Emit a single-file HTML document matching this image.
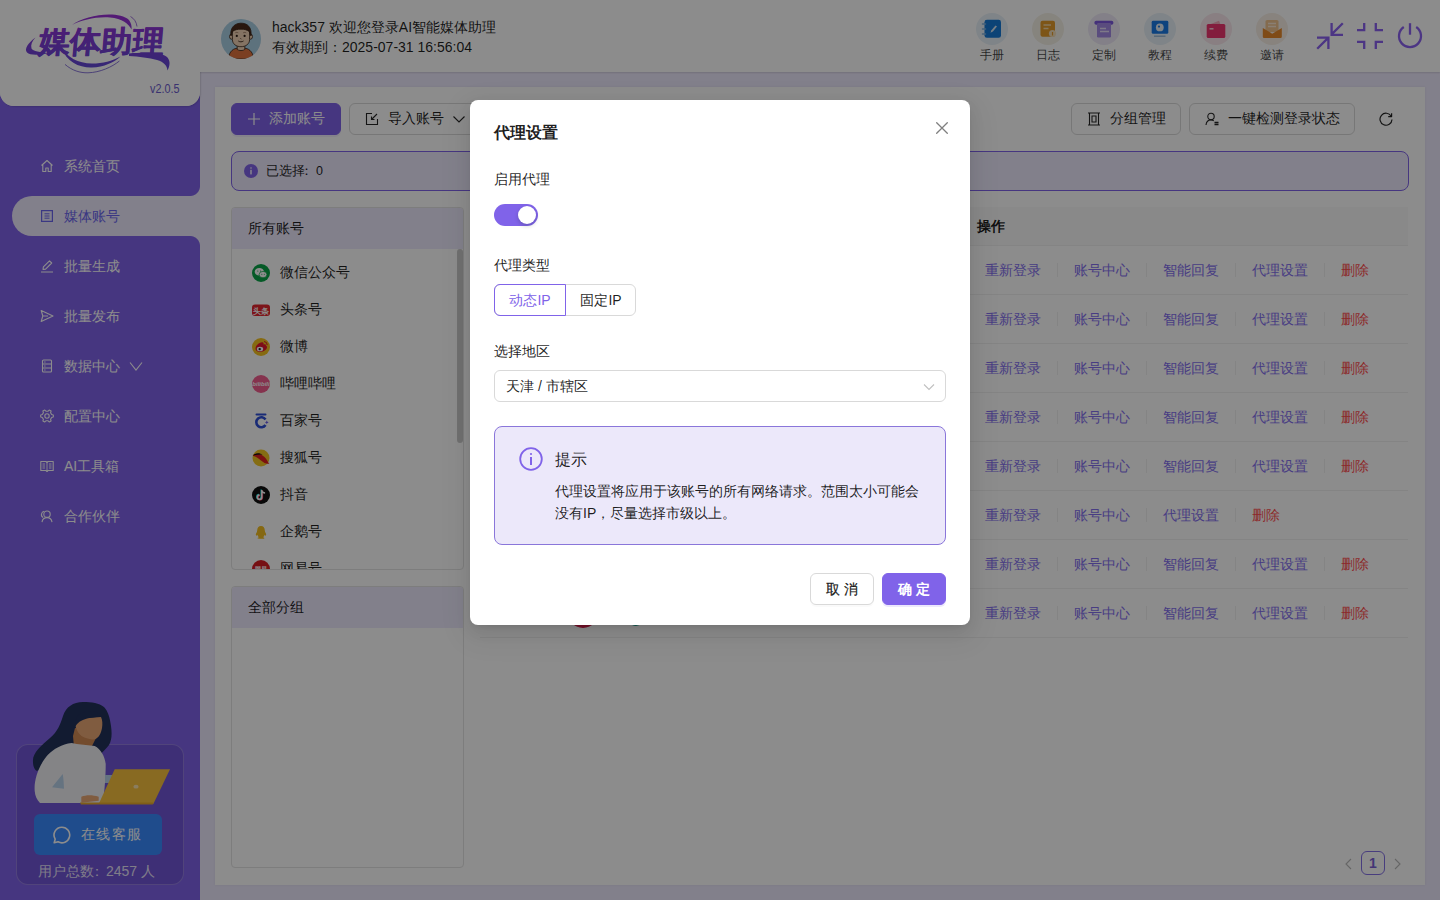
<!DOCTYPE html>
<html><head><meta charset="utf-8">
<style>
*{box-sizing:border-box;margin:0;padding:0}
html,body{width:1440px;height:900px;overflow:hidden}
body{font-family:"Liberation Sans",sans-serif;font-size:14px;color:rgba(0,0,0,.88);background:#ede9fd;position:relative}
.abs{position:absolute}
#header{left:0;top:0;width:1440px;height:72px;background:#fff;box-shadow:0 1px 1.5px rgba(0,0,0,.12);z-index:2}
#logo{left:0;top:0;width:200px;height:106px;background:#fff;border-radius:0 0 14px 14px;z-index:3}
#side{left:0;top:72px;width:200px;height:828px;background:#8063e9}
.mi{position:absolute;left:40px;height:20px;line-height:20px;color:#fff;font-size:14px;display:flex;align-items:center;white-space:nowrap}
.mi svg{width:14px;height:14px;margin-right:10px;flex:none}
#card{left:215px;top:87px;width:1210px;height:798px;background:#fff}
.btn{position:absolute;height:32px;border-radius:6px;border:1px solid #d9d9d9;background:#fff;display:flex;align-items:center;justify-content:center;font-size:14px;white-space:nowrap}
#mask{left:0;top:0;width:1440px;height:900px;background:rgba(0,0,0,.45);z-index:10}
#modal{left:470px;top:100px;width:500px;height:525px;background:#fff;border-radius:8px;z-index:11;box-shadow:0 6px 16px 0 rgba(0,0,0,.08),0 3px 6px -4px rgba(0,0,0,.12),0 9px 28px 8px rgba(0,0,0,.05)}
.hicon{position:absolute;top:13px;width:32px;height:32px;border-radius:50%}
.hlab{position:absolute;top:47px;width:40px;text-align:center;font-size:12px;line-height:16px;color:rgba(0,0,0,.75)}

.link{position:absolute;color:#8470ee;white-space:nowrap;line-height:20px}
.sep{position:absolute;width:1px;height:14px;background:rgba(5,5,5,.06)}
.acc{position:absolute;left:20px;display:flex;align-items:center;height:20px;white-space:nowrap}
.acc i{display:block;width:18px;height:18px;border-radius:50%;margin-right:10px;flex:none;position:relative}
</style></head><body>
<div id="header" class="abs">
<div class="abs" style="left:221px;top:19px;width:40px;height:40px;border-radius:50%;background:#a9cfe4;overflow:hidden">
<svg width="40" height="40" viewBox="0 0 40 40" stroke="#3a2418" stroke-width=".8">
<path d="M7.5 40c0-5 3-10.2 8.5-10.8h8c5.5.6 8.5 5.8 8.5 10.8z" fill="#e0733e"/>
<path d="M16.2 26h7.6v4.4c-1.5 1.6-6.1 1.6-7.6 0z" fill="#f0d2b4"/>
<ellipse cx="10.5" cy="17.6" rx="2" ry="2.6" fill="#f0d2b4"/><ellipse cx="29.5" cy="17.6" rx="2" ry="2.6" fill="#f0d2b4"/>
<path d="M11.4 13c0-3.5 3.2-5 8.6-5s8.6 1.5 8.6 5v7.5c0 4.5-3.8 7.2-8.6 7.2s-8.6-2.7-8.6-7.2z" fill="#f0d2b4"/>
<path d="M10 17c-1.2-7 2.5-12.5 9.5-12.8 7-.3 11.5 4 10.5 12.8-.8-1.8-1.4-3-1.8-4.5-2.2-1.8-5-2.3-8.2-2.3s-6.4.5-8.4 2.2c-.6 1.5-1 2.8-1.6 4.6z" fill="#4a2a1a"/>
<circle cx="15.8" cy="16.9" r="1.1" fill="#2a1a12" stroke="none"/><circle cx="23.6" cy="16.9" r="1.1" fill="#2a1a12" stroke="none"/>
<path d="M14.3 13.8c1-.5 2-.5 3 0M22.2 13.8c1-.5 2-.5 3 0" fill="none" stroke="#8a6650" stroke-width=".7"/>
<path d="M19.5 19.3l.8.9" fill="none"/>
<path d="M17.3 22c1.6 1.1 3.6 1.1 5.2 0" fill="none" stroke-width=".9"/>
</svg>
</div>
  <div class="abs" style="left:272px;top:17px;line-height:20px;font-size:14px;white-space:nowrap">hack357 欢迎您登录AI智能媒体助理</div>
<div class="hicon" style="left:976px;background:#e8f1f8"></div><div class="hlab" style="left:972px">手册</div><div class="hicon" style="left:1032px;background:#f5f1e6"></div><div class="hlab" style="left:1028px">日志</div><div class="hicon" style="left:1088px;background:#efeaf8"></div><div class="hlab" style="left:1084px">定制</div><div class="hicon" style="left:1144px;background:#e8f1f8"></div><div class="hlab" style="left:1140px">教程</div><div class="hicon" style="left:1200px;background:#f9e8ed"></div><div class="hlab" style="left:1196px">续费</div><div class="hicon" style="left:1256px;background:#f7efe5"></div><div class="hlab" style="left:1252px">邀请</div><svg class="abs" style="left:960px;top:0" width="340" height="50" viewBox="960 0 340 50">
<rect x="984.5" y="19.8" width="16.5" height="18" rx="2.4" fill="#167bd8"/>
<path d="M982.5 24h3M982.5 29h3M982.5 34h3" stroke="#7fb0dc" stroke-width="1.5" stroke-linecap="round"/>
<path d="M990.5 32.8l.9-2.6 4.1-4.8 1.5 1.2-4.1 4.8z" fill="#d8e6f3"/>
<rect x="1040.5" y="20.8" width="14.5" height="16" rx="2" fill="#e49b2a"/>
<path d="M1043.5 25h7.5M1043.5 28.5h5" stroke="#f5d9a8" stroke-width="1.3"/>
<circle cx="1052.5" cy="33.5" r="3.6" fill="#f3dfba"/><path d="M1052.5 32v3.5" stroke="#e49b2a" stroke-width="1.2"/>
<rect x="1094.4" y="20.8" width="19" height="4" rx="1.8" fill="#7c58df"/>
<rect x="1097" y="23" width="14" height="14.5" rx="1.2" fill="#a58be6"/>
<path d="M1100 28.5h6M1100 31.5h9" stroke="#e6ddf8" stroke-width="1.3"/>
<rect x="1151.7" y="20.8" width="16.6" height="13" rx="1.4" fill="#1a7ae6"/>
<circle cx="1159.8" cy="27.4" r="3.9" fill="#e6eef6"/><circle cx="1159" cy="26.6" r="1.1" fill="#1a7ae6"/>
<path d="M1154 36.2h11.5" stroke="#93b4d4" stroke-width="1.3"/>
<path d="M1209.5 24.5l9.5-3.8 1.5 3.8z" fill="#f3a9ba"/>
<rect x="1206.7" y="24.1" width="18.6" height="14" rx="1.5" fill="#ee3670"/>
<path d="M1209.5 28.8h4" stroke="#f8cbd7" stroke-width="1.6"/>
<rect x="1265.5" y="20" width="13" height="12" rx="1.6" fill="#f0c48f"/>
<path d="M1268 23.5h8M1268 26.5h8" stroke="#fbe8d2" stroke-width="1.3"/>
<path d="M1262.8 28l9.5 5.8 9.5-5.8v8.8a1.3 1.3 0 0 1-1.3 1.3h-16.4a1.3 1.3 0 0 1-1.3-1.3z" fill="#e8892a"/>
</svg>
<svg class="abs" style="left:1316px;top:22px" width="28" height="28" viewBox="0 0 28 28" fill="none" stroke="#8a62f0" stroke-width="2.3" stroke-linecap="butt"><path d="M26.8 1.2L15.6 12.4M15.6 1v11.8H27M1.2 26.8L12.4 15.6M1 15.6H12.4V27"/></svg>
<svg class="abs" style="left:1357px;top:23px" width="26" height="26" viewBox="0 0 26 26" fill="none" stroke="#8a62f0" stroke-width="2.3"><path d="M7.2 0v7.2H0M18.8 0v7.2H26M7.2 26v-7.2H0M18.8 26v-7.2H26"/></svg>
<svg class="abs" style="left:1397px;top:22px" width="26" height="28" viewBox="0 0 26 28" fill="none" stroke="#8a62f0" stroke-width="2.3"><path d="M13 1.2v11.5"/><path d="M19.2 5A11 11 0 1 1 6.8 5"/></svg>
  <div class="abs" style="left:272px;top:37px;line-height:20px;font-size:14px;white-space:nowrap">有效期到：2025-07-31 16:56:04</div>
</div>
<div class="abs" style="left:0;top:60px;width:200px;height:46px;border-radius:0 0 14px 14px;box-shadow:1px 1px 1.5px rgba(0,0,0,.12);z-index:1;background:#fff"></div>
<div id="logo" class="abs">
<svg width="200" height="106" viewBox="0 0 200 106" style="position:absolute;left:0;top:0">
<defs><linearGradient id="lg" gradientUnits="userSpaceOnUse" x1="0" y1="14" x2="0" y2="72"><stop offset="0" stop-color="#9b2fd6"/><stop offset="1" stop-color="#5d4ad6"/></linearGradient></defs>
<g fill="url(#lg)">
<path d="M72 25C85 15 118 10 129 20 131 23 132 26 131.5 29.5 129 24 122 18.5 110 17.5 96 16.5 82 20 72 25z"/>
<path d="M35.5 37.5C28 43 24 49 27 52.5 30 55.5 40 55 49 53 40 52 33 51.5 31.5 48.5 30.5 45 32 41 35.5 37.5z"/>
<path d="M62 48C66 62 80 68 92 67.5 104 67 114 62.5 120.5 56.5 112 61 103 63.5 92 63.5 78 63.5 67 57 62 48z"/>
<path d="M129 53.5C148 52 163 53 167.5 57.5 170.5 61 170 66 167.5 70.5 167 65.5 164 62 157 60 149 58 139 56.5 129 56z"/>
<text x="38" y="52.5" font-family="Liberation Sans" font-weight="bold" font-size="30" transform="skewX(-5) translate(4.5 0)" textLength="125" lengthAdjust="spacingAndGlyphs" stroke="url(#lg)" stroke-width=".5" stroke-linejoin="round">媒体助理</text>
</g>
<path d="M130.5 16.5C134 18.5 136.5 22 137 26.5" fill="none" stroke="#8a4fd0" stroke-width=".8"/>
<path d="M65 64.4C72 70.5 80 73 88 72.8 100 72.5 112 67 119.4 61" fill="none" stroke="#6d56d0" stroke-width=".8"/>
<text x="150" y="93" font-family="Liberation Sans" font-size="12" fill="#6a5bcc" textLength="29.5" lengthAdjust="spacingAndGlyphs">v2.0.5</text>
</svg>
</div>
<div id="side" class="abs">
  <div class="abs" style="left:12px;top:124px;width:188px;height:40px;background:#ede9fd;border-radius:20px 0 0 20px"></div>
  <div class="abs" style="left:190px;top:114px;width:10px;height:10px;background:radial-gradient(circle at 0 0,#8063e9 9.5px,#ede9fd 10.5px)"></div>
  <div class="abs" style="left:190px;top:164px;width:10px;height:10px;background:radial-gradient(circle at 0 100%,#8063e9 9.5px,#ede9fd 10.5px)"></div>
</div>
<div class="mi" style="top:156px;z-index:4"><svg viewBox="0 0 14 14" fill="none" stroke="currentColor" stroke-width="1.1" stroke-linejoin="round"><path d="M1.5 6.5L7 1.5l5.5 5M2.8 5.5V12.5h3V9h2.4v3.5h3V5.5"/></svg>系统首页</div>
<div class="mi" style="top:206px;z-index:4;color:#6a64ee"><svg viewBox="0 0 14 14" fill="none" stroke="currentColor" stroke-width="1.2"><rect x="1.6" y="1.6" width="10.8" height="10.8"/><path d="M4.5 4.8h5M4.5 7h5M4.5 9.2h5" stroke-width="1"/></svg>媒体账号</div>
<div class="mi" style="top:256px;z-index:4"><svg viewBox="0 0 14 14" fill="none" stroke="currentColor" stroke-width="1.1" stroke-linejoin="round"><path d="M1 13h12M3 10.5l.4-2.6L9.5 1.8l2.2 2.2-6.1 6.1z"/></svg>批量生成</div>
<div class="mi" style="top:306px;z-index:4"><svg viewBox="0 0 14 14" fill="none" stroke="currentColor" stroke-width="1.1" stroke-linejoin="round"><path d="M1.2 1.5L13 7 1.2 12.5 2.8 7zM2.8 7H8"/></svg>批量发布</div>
<div class="mi" style="top:356px;z-index:4"><svg viewBox="0 0 14 14" fill="none" stroke="currentColor" stroke-width="1.1"><rect x="2.5" y="1" width="9" height="12" rx="1"/><path d="M2.5 5h9M2.5 9h9"/><path d="M4.2 3h1.3M4.2 7h1.3M4.2 11h1.3" stroke-width="1"/></svg>数据中心<svg viewBox="0 0 14 14" fill="none" stroke="currentColor" stroke-width="1.1" style="margin-left:9px;margin-right:0;width:14px;height:14px"><path d="M1 3.5l6 7.5 6-7.5"/></svg></div>
<div class="mi" style="top:406px;z-index:4"><svg viewBox="0 0 14 14" fill="none" stroke="currentColor" stroke-width="1.1" stroke-linejoin="round"><path d="M11.68 5.55L13.31 5.92L13.31 8.08L11.68 8.45L10.59 10.33L11.09 11.92L9.22 13.00L8.09 11.78L5.91 11.78L4.78 13.00L2.91 11.92L3.41 10.33L2.32 8.45L0.69 8.08L0.69 5.92L2.32 5.55L3.41 3.67L2.91 2.08L4.78 1.00L5.91 2.22L8.09 2.22L9.22 1.00L11.09 2.08L10.59 3.67z"/><circle cx="7" cy="7" r="2.2"/></svg>配置中心</div>
<div class="mi" style="top:456px;z-index:4"><svg viewBox="0 0 14 14" fill="none" stroke="currentColor" stroke-width="1.1"><path d="M.8 2.5h5.2L7 3.5l1-1h5.2v9H8L7 12.5 6 11.5H.8z" stroke-linejoin="round"/><path d="M7 3.5v9M2.5 5h2.5M2.5 7h2.5M2.5 9h2.5M9 5h2.5M9 7h2.5M9 9h2.5" stroke-width=".9"/></svg>AI工具箱</div>
<div class="mi" style="top:506px;z-index:4"><svg viewBox="0 0 14 14" fill="none" stroke="currentColor" stroke-width="1.1"><circle cx="7" cy="5.2" r="3.2"/><path d="M2 13.2c.4-2.8 2.3-4.6 5-4.6s4.6 1.8 5 4.6"/><path d="M3.2 8.5C1.8 7.8 1.2 6.5 1.5 5 1.8 3.6 2.8 2.6 4.2 2.3"/></svg>合作伙伴</div>

<div id="card" class="abs" style="box-shadow:0 0 2px rgba(0,0,0,.08)"></div>
<div class="btn" style="left:231px;top:103px;width:110px;background:#8063e9;border-color:#8063e9;color:#fff;box-shadow:0 2px 0 rgba(128,99,233,.1)"><svg width="12" height="12" viewBox="0 0 12 12" style="margin-right:9px"><path d="M6 0v12M0 6h12" stroke="#fff" stroke-width="1.2"/></svg>添加账号</div>
<div class="btn" style="left:349px;top:103px;width:130px;justify-content:flex-start;padding-left:15px"><svg width="14" height="14" viewBox="0 0 14 14" fill="none" stroke="rgba(0,0,0,.85)" stroke-width="1.1" style="margin-right:9px"><path d="M7 1.5H1.5v11h11V7M6.5 7.5L12 2M6.5 4.5v3h3"/></svg>导入账号<svg width="14" height="14" viewBox="0 0 14 14" fill="none" stroke="rgba(0,0,0,.85)" stroke-width="1.1" style="margin-left:8px"><path d="M1.5 4.5L7 10l5.5-5.5"/></svg></div>
<div class="btn" style="left:1071px;top:103px;width:110px"><svg width="14" height="14" viewBox="0 0 14 14" fill="none" stroke="rgba(0,0,0,.85)" stroke-width="1.1" style="margin-right:9px"><path d="M1 1h12M1 13h12M2.5 1v12M11.5 1v12M5 4h4v6H5z"/></svg>分组管理</div>
<div class="btn" style="left:1189px;top:103px;width:166px"><svg width="14" height="14" viewBox="0 0 14 14" fill="none" stroke="rgba(0,0,0,.85)" stroke-width="1.1" style="margin-right:9px"><circle cx="6" cy="4.5" r="3.2"/><path d="M1 13c.3-3 2.3-5 5-5 1.2 0 2 .3 2.8.8"/><path d="M9.5 10.5h4M9.5 12.5h4" stroke-width="1.3"/></svg>一键检测登录状态</div>
<svg class="abs" style="left:1379px;top:112px" width="14" height="14" viewBox="0 0 14 14" fill="none" stroke="rgba(0,0,0,.85)" stroke-width="1.2"><path d="M12.2 4.2A6 6 0 1 0 13 7.5"/><path d="M12.6 1.2v3.4H9.2" stroke-linejoin="round"/></svg>
<div class="abs" style="left:231px;top:151px;width:1178px;height:40px;border:1px solid #8063e9;background:#ede9fd;border-radius:8px"></div>
<svg class="abs" style="left:244px;top:164px" width="14" height="14" viewBox="0 0 14 14"><circle cx="7" cy="7" r="7" fill="#8063e9"/><rect x="6.3" y="5.8" width="1.4" height="4.6" fill="#fff"/><circle cx="7" cy="4" r=".8" fill="#fff"/></svg>
<div class="abs" style="left:266px;top:161px;line-height:20px;font-size:12.5px">已选择<span style="margin-left:-5px;margin-right:3px">：</span>0</div>
<!-- account panel -->
<div class="abs" style="left:231px;top:207px;width:233px;height:363px;border:1px solid #e3e3e3;border-radius:4px;overflow:hidden;background:#fff">
  <div style="height:41px;background:#ede9fd;line-height:40px;padding-left:16px">所有账号</div>
  <div class="abs" style="left:225px;top:41px;width:6px;height:194px;background:rgba(0,0,0,.2);border-radius:3px"></div>
  <div class="acc" style="top:55px"><svg width="18" height="18" viewBox="0 0 18 18" style="margin-right:10px;flex:none"><circle cx="9" cy="9" r="9" fill="#0aa547"/><ellipse cx="7.3" cy="7.8" rx="4.6" ry="3.8" fill="#fff"/><ellipse cx="11" cy="10.6" rx="3.9" ry="3.2" fill="#fff" stroke="#0aa547" stroke-width=".7"/><circle cx="5.8" cy="7" r=".6" fill="#0aa547"/><circle cx="8.6" cy="7" r=".6" fill="#0aa547"/><circle cx="9.8" cy="10.2" r=".5" fill="#0aa547"/><circle cx="12.3" cy="10.2" r=".5" fill="#0aa547"/></svg>微信公众号</div><div class="acc" style="top:92px"><svg width="18" height="18" viewBox="0 0 18 18" style="margin-right:10px;flex:none"><rect x="0" y="3.5" width="18" height="11.5" rx="3" fill="#e3262e"/><text x="9" y="12.5" text-anchor="middle" font-size="7.5" font-weight="bold" fill="#fff" font-family="Liberation Sans">头条</text></svg>头条号</div><div class="acc" style="top:129px"><svg width="18" height="18" viewBox="0 0 18 18" style="margin-right:10px;flex:none"><circle cx="9" cy="9" r="9" fill="#f4c21f"/><path d="M3.5 10.5c0-3 3.5-6 6.5-6.3 1.5-.1 2 1 1.4 2.2 1.6-.6 2.8 0 2.5 1.2 2 .8 1.5 4.2-2.5 5.7-4 1.4-7.9.3-7.9-2.8z" fill="#e6162d"/><ellipse cx="8" cy="11" rx="3.2" ry="2.3" fill="#fff"/><circle cx="7.7" cy="11.1" r="1.2" fill="#222"/><path d="M12 3.5a3.5 3.5 0 0 1 3.2 3.6" stroke="#e6162d" stroke-width="1" fill="none"/></svg>微博</div><div class="acc" style="top:166px"><svg width="18" height="18" viewBox="0 0 18 18" style="margin-right:10px;flex:none"><circle cx="9" cy="9" r="9" fill="#f25d8e"/><text x="9" y="11.3" text-anchor="middle" font-size="6" font-style="italic" fill="#fff" font-family="Liberation Sans" font-weight="bold">bilibili</text></svg>哔哩哔哩</div><div class="acc" style="top:203px"><svg width="18" height="18" viewBox="0 0 18 18" style="margin-right:10px;flex:none"><path d="M4.5 2.5h9" stroke="#2e4fd8" stroke-width="2" stroke-linecap="round"/><path d="M13.5 7.5A5 5 0 1 0 13.5 13" fill="none" stroke="#2e4fd8" stroke-width="2.6"/><path d="M14.8 8.5l.6 1.3 1.3.6-1.3.6-.6 1.3-.6-1.3-1.3-.6 1.3-.6z" fill="#6b5be8"/></svg>百家号</div><div class="acc" style="top:240px"><svg width="18" height="18" viewBox="0 0 18 18" style="margin-right:10px;flex:none"><circle cx="9" cy="9" r="8.5" fill="#f3c623"/><path d="M.8 6.5C4 3.5 9 4.5 12.5 8s3.5 6 5 6.5c-2.5 1-5.5-.5-8.5-3S3 7.5.8 6.5z" fill="#e02020"/><path d="M.8 6.5C4 3.5 8 3.8 10.5 5.7 8 5.2 4 5.8.8 6.5z" fill="#111"/></svg>搜狐号</div><div class="acc" style="top:277px"><svg width="18" height="18" viewBox="0 0 18 18" style="margin-right:10px;flex:none"><circle cx="9" cy="9" r="9" fill="#111"/><path d="M9.8 4v7.2a2.2 2.2 0 1 1-2.2-2.2" fill="none" stroke="#25f4ee" stroke-width="1.5" transform="translate(-.6 -.4)"/><path d="M9.8 4v7.2a2.2 2.2 0 1 1-2.2-2.2" fill="none" stroke="#fe2c55" stroke-width="1.5" transform="translate(.6 .4)"/><path d="M9.8 4v7.2a2.2 2.2 0 1 1-2.2-2.2M9.8 4c.3 1.8 1.6 3 3.3 3.1" fill="none" stroke="#fff" stroke-width="1.5"/></svg>抖音</div><div class="acc" style="top:314px"><svg width="18" height="18" viewBox="0 0 18 18" style="margin-right:10px;flex:none"><path d="M9 3c2.5 0 3.8 2 3.8 4.5 0 1 .5 1.8 1 2.8.6 1.2.4 2.3-.2 2.4-.4-.1-.7-.6-.9-1-.4 1.2-1 2-1.6 2.5 1 .3 1.5.8 1.2 1.2-.5.5-4.6.5-6.6 0-.4-.4.2-.9 1.2-1.2-.6-.5-1.2-1.3-1.6-2.5-.2.4-.5.9-.9 1-.6-.1-.8-1.2-.2-2.4.5-1 1-1.8 1-2.8C5.2 5 6.5 3 9 3z" fill="#f2be22"/></svg>企鹅号</div><div class="acc" style="top:351px"><svg width="18" height="18" viewBox="0 0 18 18" style="margin-right:10px;flex:none"><circle cx="9" cy="9" r="9" fill="#d81e24"/><text x="9" y="11" text-anchor="middle" font-size="6" font-weight="bold" fill="#fff" font-family="Liberation Sans">网易</text></svg>网易号</div>
</div>
<div class="abs" style="left:231px;top:586px;width:233px;height:282px;border:1px solid #e3e3e3;border-radius:4px;overflow:hidden;background:#fff">
  <div style="height:41px;background:#ede9fd;line-height:41px;padding-left:16px">全部分组</div>
</div>
<!-- table -->
<div class="abs" style="left:480px;top:207px;width:928px;height:39px;background:#fafafa;border-bottom:1px solid #f0f0f0"></div>
<div class="abs" style="left:977px;top:216px;line-height:20px;font-weight:bold">操作</div>
<div class="abs" style="left:480px;top:246px;width:928px;height:49px;border-bottom:1px solid #f0f0f0"></div><div class="link" style="left:985px;top:260px;color:#8470ee">重新登录</div><div class="sep" style="left:1057px;top:263px"></div><div class="link" style="left:1074px;top:260px;color:#8470ee">账号中心</div><div class="sep" style="left:1146px;top:263px"></div><div class="link" style="left:1163px;top:260px;color:#8470ee">智能回复</div><div class="sep" style="left:1235px;top:263px"></div><div class="link" style="left:1252px;top:260px;color:#8470ee">代理设置</div><div class="sep" style="left:1324px;top:263px"></div><div class="link" style="left:1341px;top:260px;color:#ff4d4f">删除</div><div class="abs" style="left:480px;top:295px;width:928px;height:49px;border-bottom:1px solid #f0f0f0"></div><div class="link" style="left:985px;top:309px;color:#8470ee">重新登录</div><div class="sep" style="left:1057px;top:312px"></div><div class="link" style="left:1074px;top:309px;color:#8470ee">账号中心</div><div class="sep" style="left:1146px;top:312px"></div><div class="link" style="left:1163px;top:309px;color:#8470ee">智能回复</div><div class="sep" style="left:1235px;top:312px"></div><div class="link" style="left:1252px;top:309px;color:#8470ee">代理设置</div><div class="sep" style="left:1324px;top:312px"></div><div class="link" style="left:1341px;top:309px;color:#ff4d4f">删除</div><div class="abs" style="left:480px;top:344px;width:928px;height:49px;border-bottom:1px solid #f0f0f0"></div><div class="link" style="left:985px;top:358px;color:#8470ee">重新登录</div><div class="sep" style="left:1057px;top:361px"></div><div class="link" style="left:1074px;top:358px;color:#8470ee">账号中心</div><div class="sep" style="left:1146px;top:361px"></div><div class="link" style="left:1163px;top:358px;color:#8470ee">智能回复</div><div class="sep" style="left:1235px;top:361px"></div><div class="link" style="left:1252px;top:358px;color:#8470ee">代理设置</div><div class="sep" style="left:1324px;top:361px"></div><div class="link" style="left:1341px;top:358px;color:#ff4d4f">删除</div><div class="abs" style="left:480px;top:393px;width:928px;height:49px;border-bottom:1px solid #f0f0f0"></div><div class="link" style="left:985px;top:407px;color:#8470ee">重新登录</div><div class="sep" style="left:1057px;top:410px"></div><div class="link" style="left:1074px;top:407px;color:#8470ee">账号中心</div><div class="sep" style="left:1146px;top:410px"></div><div class="link" style="left:1163px;top:407px;color:#8470ee">智能回复</div><div class="sep" style="left:1235px;top:410px"></div><div class="link" style="left:1252px;top:407px;color:#8470ee">代理设置</div><div class="sep" style="left:1324px;top:410px"></div><div class="link" style="left:1341px;top:407px;color:#ff4d4f">删除</div><div class="abs" style="left:480px;top:442px;width:928px;height:49px;border-bottom:1px solid #f0f0f0"></div><div class="link" style="left:985px;top:456px;color:#8470ee">重新登录</div><div class="sep" style="left:1057px;top:459px"></div><div class="link" style="left:1074px;top:456px;color:#8470ee">账号中心</div><div class="sep" style="left:1146px;top:459px"></div><div class="link" style="left:1163px;top:456px;color:#8470ee">智能回复</div><div class="sep" style="left:1235px;top:459px"></div><div class="link" style="left:1252px;top:456px;color:#8470ee">代理设置</div><div class="sep" style="left:1324px;top:459px"></div><div class="link" style="left:1341px;top:456px;color:#ff4d4f">删除</div><div class="abs" style="left:480px;top:491px;width:928px;height:49px;border-bottom:1px solid #f0f0f0"></div><div class="link" style="left:985px;top:505px;color:#8470ee">重新登录</div><div class="sep" style="left:1057px;top:508px"></div><div class="link" style="left:1074px;top:505px;color:#8470ee">账号中心</div><div class="sep" style="left:1146px;top:508px"></div><div class="link" style="left:1163px;top:505px;color:#8470ee">代理设置</div><div class="sep" style="left:1235px;top:508px"></div><div class="link" style="left:1252px;top:505px;color:#ff4d4f">删除</div><div class="abs" style="left:480px;top:540px;width:928px;height:49px;border-bottom:1px solid #f0f0f0"></div><div class="link" style="left:985px;top:554px;color:#8470ee">重新登录</div><div class="sep" style="left:1057px;top:557px"></div><div class="link" style="left:1074px;top:554px;color:#8470ee">账号中心</div><div class="sep" style="left:1146px;top:557px"></div><div class="link" style="left:1163px;top:554px;color:#8470ee">智能回复</div><div class="sep" style="left:1235px;top:557px"></div><div class="link" style="left:1252px;top:554px;color:#8470ee">代理设置</div><div class="sep" style="left:1324px;top:557px"></div><div class="link" style="left:1341px;top:554px;color:#ff4d4f">删除</div><div class="abs" style="left:480px;top:589px;width:928px;height:49px;border-bottom:1px solid #f0f0f0"></div><div class="link" style="left:985px;top:603px;color:#8470ee">重新登录</div><div class="sep" style="left:1057px;top:606px"></div><div class="link" style="left:1074px;top:603px;color:#8470ee">账号中心</div><div class="sep" style="left:1146px;top:606px"></div><div class="link" style="left:1163px;top:603px;color:#8470ee">智能回复</div><div class="sep" style="left:1235px;top:606px"></div><div class="link" style="left:1252px;top:603px;color:#8470ee">代理设置</div><div class="sep" style="left:1324px;top:606px"></div><div class="link" style="left:1341px;top:603px;color:#ff4d4f">删除</div>
<div class="abs" style="left:568px;top:598px;width:30px;height:30px;border-radius:50%;background:#d41e4c"></div><div class="abs" style="left:627px;top:604px;width:18px;height:22px;border-radius:50%;background:#1f9c8c"></div>
<!-- pagination -->
<svg class="abs" style="left:1344px;top:858px" width="10" height="12" viewBox="0 0 10 12" fill="none" stroke="rgba(0,0,0,.28)" stroke-width="1.1"><path d="M7 1L2 6l5 5"/></svg>
<div class="abs" style="left:1361px;top:851px;width:24px;height:24px;border:1px solid #8470e6;border-radius:6px;text-align:center;line-height:22px;color:#7a62d8;font-weight:bold;font-size:14px">1</div>
<svg class="abs" style="left:1392px;top:858px" width="10" height="12" viewBox="0 0 10 12" fill="none" stroke="rgba(0,0,0,.28)" stroke-width="1.1"><path d="M3 1l5 5-5 5"/></svg>

<div class="abs" style="left:16px;top:744px;width:168px;height:141px;border:1px solid rgba(255,255,255,.24);border-radius:12px;background:rgba(30,10,110,.14);z-index:4"></div>
<svg class="abs" style="left:0;top:690px;z-index:5" width="200" height="130" viewBox="0 690 200 130">
<path d="M83 702c-10 0-17 5-20 14-3 9-5 15-13 22-9 8-18 15-17 24 0 5 2 8 4 9l15-10 48-6c3-4 7-7 9-10 3-5 3-12 2-19-1-8-3-15-7-19-5-4-12-5-21-5z" fill="#22325a"/>
<path d="M73 736l2-8 18 2 3 8-4 8-18 1z" fill="#d28a55"/><path d="M75.5 726c1-4 3-6 6-7.5l19.5-1.5c1.5 3 1.7 7 1 11-.8 5-3 9.5-6.5 11-3 1-7 0-11-1.5-4-1.5-7.5-5.5-9-11.5z" fill="#eaa876"/><path d="M75 727c2-4 6-7 12-8.5 5-1.2 10-1.5 14.5-2-1-3-4-5-8-5.5-6-.5-12 1-15.5 4.5-2 2.5-3 7-3 11.5z" fill="#22325a"/>

<path d="M34.7 791c-1-12 5-27 13-36 6-6 14-11 24-12l5 1 18 2c6 3 10 10 11 18 0 12-1 24-2 33l-2 6H40c-3-3-5-7-5.3-12z" fill="#f1f1f5"/>
<path d="M52 787.3l10.7-13.3c1 5 1 10 1.3 14.7z" fill="#b8d1ea"/>
<path d="M105 775h8v8h-8z" fill="#b8d1ea"/>
<path d="M81.3 796.7c5-2 11-2 17.4 0v4l-17.4 2z" fill="#eaa876"/>
<path d="M114.7 769.3H170l-16.7 34.7H98.7z" fill="#f8c23e"/>
<path d="M80 802.5h73.3l-.5 2H81z" fill="#e8aa2c"/>
<ellipse cx="136" cy="786.7" rx="2.6" ry="1.9" fill="#fbe3b0"/>
</svg>
<div class="abs" style="left:34px;top:814px;width:128px;height:41px;border-radius:6px;background:#3a8bff;display:flex;align-items:center;justify-content:flex-start;padding-left:18px;color:#fff;z-index:5;font-size:14px;letter-spacing:1.4px"><svg width="20" height="20" viewBox="0 0 20 20" fill="none" stroke="#fff" stroke-width="1.6" style="margin-right:9px"><path d="M10 2.2a7.8 7.8 0 1 1-3.9 14.6L2.2 17.8l1-3.7A7.8 7.8 0 0 1 10 2.2z" stroke-linejoin="round"/></svg>在线客服</div>
<div class="abs" style="left:38px;top:861px;line-height:20px;color:rgba(255,255,255,.85);z-index:5;white-space:nowrap">用户总数<span style="margin-left:-4px;margin-right:2px">：</span>2457 人</div>
<div id="mask" class="abs"></div>
<div id="modal" class="abs">
  <div class="abs" style="left:24px;top:21px;font-size:16px;line-height:24px;font-weight:bold;color:rgba(0,0,0,.88)">代理设置</div>
  <svg class="abs" style="left:466px;top:22px" width="12" height="12" viewBox="0 0 12 12" fill="none" stroke="rgba(0,0,0,.5)" stroke-width="1.3" stroke-linecap="round"><path d="M.7.7l10.6 10.6M11.3.7L.7 11.3"/></svg>
  <div class="abs" style="left:24px;top:69px;line-height:20px">启用代理</div>
  <div class="abs" style="left:24px;top:104px;width:44px;height:22px;border-radius:11px;background:#8063e9"><div class="abs" style="left:24px;top:2px;width:18px;height:18px;border-radius:50%;background:#fff;box-shadow:0 2px 4px rgba(0,35,11,.2)"></div></div>
  <div class="abs" style="left:24px;top:155px;line-height:20px">代理类型</div>
  <div class="abs" style="left:24px;top:184px;width:142px;height:32px;border:1px solid #d9d9d9;border-radius:6px"></div>
  <div class="abs" style="left:24px;top:184px;width:72px;height:32px;border:1px solid #8063e9;border-radius:6px 0 0 6px;color:#8063e9;text-align:center;line-height:30px">动态IP</div>
  <div class="abs" style="left:96px;top:184px;width:70px;height:32px;text-align:center;line-height:32px">固定IP</div>
  <div class="abs" style="left:24px;top:241px;line-height:20px">选择地区</div>
  <div class="abs" style="left:24px;top:270px;width:452px;height:32px;border:1px solid #d9d9d9;border-radius:6px;line-height:30px;padding-left:11px">天津 / 市辖区
    <svg class="abs" style="left:428px;top:10px" width="12" height="12" viewBox="0 0 12 12" fill="none" stroke="rgba(0,0,0,.25)" stroke-width="1.1"><path d="M1 3.5l5 5 5-5"/></svg>
  </div>
  <div class="abs" style="left:24px;top:326px;width:452px;height:119px;border:1px solid #8a76da;border-radius:8px;background:#ece8fa">
    <svg class="abs" style="left:24px;top:20px" width="24" height="24" viewBox="0 0 24 24" fill="none" stroke="#8063e9" stroke-width="1.8"><circle cx="12" cy="12" r="10.8"/><path d="M12 10v8" stroke-width="2"/><circle cx="12" cy="7" r="1.1" fill="#8063e9" stroke="none"/></svg>
    <div class="abs" style="left:60px;top:21px;font-size:16px;line-height:24px">提示</div>
    <div class="abs" style="left:60px;top:52.5px;width:368px;line-height:22px">代理设置将应用于该账号的所有网络请求。范围太小可能会没有IP，尽量选择市级以上。</div>
  </div>
  <div class="btn" style="left:340px;top:473px;width:64px;color:rgba(0,0,0,.88);box-shadow:0 2px 0 rgba(0,0,0,.02);padding-top:1px;-webkit-text-stroke:.25px rgba(0,0,0,.88)">取 消</div>
  <div class="btn" style="left:412px;top:473px;width:64px;background:#8063e9;border-color:#8063e9;color:#fff;box-shadow:0 2px 0 rgba(128,99,233,.15);font-weight:bold;padding-top:1px">确 定</div>
</div>
</body></html>
